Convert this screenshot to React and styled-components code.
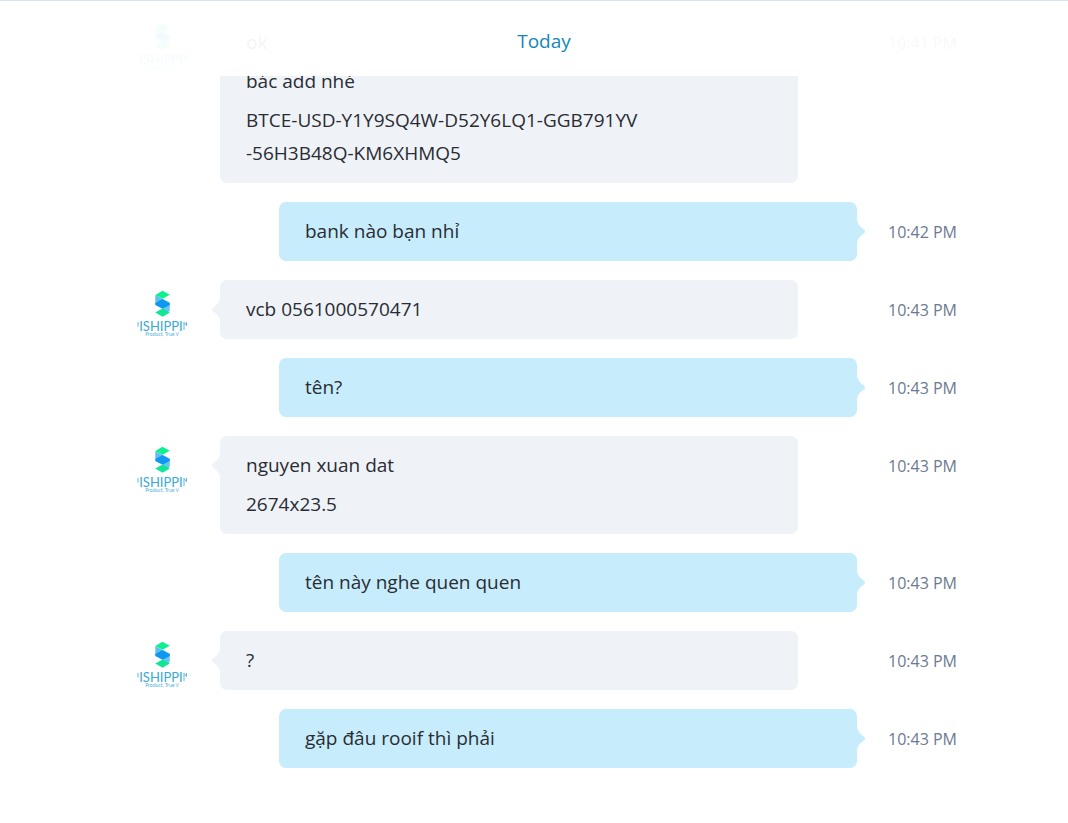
import React from "react";
import styled, { createGlobalStyle } from "styled-components";

const GlobalStyle = createGlobalStyle`
  * {
    box-sizing: border-box;
  }

  body {
    margin: 0;
    background-color: #fff;
    font-family: "Open Sans", "Noto Sans", sans-serif;
  }
`;

const Page = styled.main`
  position: relative;
  min-height: 100vh;
  border-top: 1px solid #d8e4ee;
`;

// sits over the scrolled messages
const DayHeader = styled.header`
  position: absolute;
  top: 0;
  left: 0;
  right: 0;
  z-index: 1;
  display: flex;
  justify-content: center;
  height: 75px;
  padding: 24px 0 0 20px;
  background-color: rgba(255, 255, 255, 0.95);
`;

const DayTitle = styled.h2`
  margin: 0;
  font-size: 19px;
  font-weight: 400;
  line-height: 32px;
  color: #1487b8;
`;

const MessageList = styled.ol`
  display: flex;
  flex-direction: column;
  gap: 19px;
  margin: 0;
  padding: 12px 110px 55px 137px;
  list-style: none;
`;

const MessageRow = styled.li`
  display: grid;
  grid-template-columns: 50px 1fr 70px;
  align-items: start;
`;

const AvatarBox = styled.div`
  height: 50px;
  margin-top: 7px;
`;

const Bubble = styled.div`
  position: relative;
  margin: ${({ $mine }) => ($mine ? "0 31px 0 92px" : "0 90px 0 33px")};
  padding: 13px 26px;
  border-radius: 7px;
  background-color: ${({ $mine }) => ($mine ? "#c7ecfc" : "#eff3f8")};
  color: ${({ $mine }) => ($mine ? "#c7ecfc" : "#eff3f8")};
`;

const Tail = styled.svg`
  position: absolute;
  top: 17px;
  ${({ $mine }) => ($mine ? "left: 100%;" : "right: 100%; transform: scaleX(-1);")}
  width: 8px;
  height: 25px;
`;

const Line = styled.p`
  margin: 0;
  font-size: 19px;
  line-height: 33px;
  color: #2a2c33;
  white-space: pre-line;

  & + & {
    margin-top: 6px;
  }
`;

const Time = styled.time`
  padding-top: 14px;
  font-size: 16px;
  line-height: 33px;
  color: #6b7a92;
  white-space: nowrap;
`;

const messages = [
  {
    time: "10:41 PM",
    lines: [
      "ok",
      "bác add nhé",
      "BTCE-USD-Y1Y9SQ4W-D52Y6LQ1-GGB791YV\n-56H3B48Q-KM6XHMQ5",
    ],
  },
  { mine: true, time: "10:42 PM", lines: ["bank nào bạn nhỉ"] },
  { time: "10:43 PM", lines: ["vcb 0561000570471"] },
  { mine: true, time: "10:43 PM", lines: ["tên?"] },
  { time: "10:43 PM", lines: ["nguyen xuan dat", "2674x23.5"] },
  { mine: true, time: "10:43 PM", lines: ["tên này nghe quen quen"] },
  { time: "10:43 PM", lines: ["?"] },
  { mine: true, time: "10:43 PM", lines: ["gặp đâu rooif thì phải"] },
];

const Avatar = () => (
  <svg width="50" height="50" viewBox="0 0 50 50" role="img" aria-label="Shipping">
    <path d="M25.5 12 L32.8 15.5 V24 L25.5 28 Z" fill="#6cc3f5" />
    <path d="M18.3 8 L25.5 12 V20 L18.3 17 Z" fill="#62bdf2" />
    <path d="M25.5 3.7 L32.8 7.7 L25.5 11.8 L18.3 8 Z" fill="#0cf08e" />
    <path d="M18.3 16 L25.5 12 L32.8 16.2 V18 L25.5 21.7 L18.3 18 Z" fill="#0e98f0" />
    <path d="M18.3 25.6 L25.5 21.5 L32.8 25.4 L25.5 29.7 Z" fill="#0fe795" />
    {/* outer letters, cut by the avatar edge */}
    <path d="M1 35 V39.5 M47 35 V43 M47 35.5 L49.5 38.5 V35" fill="none" stroke="#5fb9dd" />
    <text x="24" y="44" textAnchor="middle" fontFamily="Lato, sans-serif" fontSize="13" fill="#3ba9d4">
      ISHIPPI
    </text>
    <text x="25" y="49" textAnchor="middle" fontFamily="Lato, sans-serif" fontSize="5" fill="#4bb0da">
      Product, True V
    </text>
  </svg>
);

const Message = ({ mine, time, lines }) => (
  <MessageRow>
    <AvatarBox>{!mine && <Avatar />}</AvatarBox>
    <Bubble $mine={mine}>
      <Tail $mine={mine} viewBox="0 0 8 25" aria-hidden="true">
        <path d="M0 0 C0.5 5 3 8 7 10.5 Q9 12.5 7 14.5 C3 17 0.5 20 0 25 Z" fill="currentColor" />
      </Tail>
      {lines.map((line) => (
        <Line key={line}>{line}</Line>
      ))}
    </Bubble>
    <Time>{time}</Time>
  </MessageRow>
);

const App = () => {
  return (
    <>
      <GlobalStyle />
      <Page>
        <DayHeader>
          <DayTitle>Today</DayTitle>
        </DayHeader>
        <MessageList>
          {messages.map((message, index) => (
            <Message key={index} {...message} />
          ))}
        </MessageList>
      </Page>
    </>
  );
};

export default App;
